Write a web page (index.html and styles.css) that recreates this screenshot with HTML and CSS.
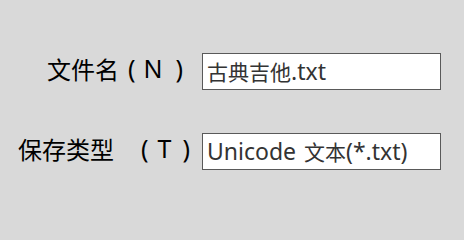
FILE: index.html
```html
<!DOCTYPE html>
<html lang="zh">
<head>
<meta charset="utf-8">
<link rel="stylesheet" href="styles.css">
</head>
<body>
<div class="form">
  <div class="label label-name">
    <span class="zh">文件名</span><span class="paren open">(</span><span class="key">N</span><span class="paren close">)</span>
  </div>
  <div class="field"><span class="zh">古典吉他</span>.txt</div>
  <div class="label label-type">
    <span class="zh">保存类型</span><span class="paren open">(</span><span class="key">T</span><span class="paren close">)</span>
  </div>
  <div class="field">Unicode <span class="zh spaced">文本</span>(*.txt)</div>
</div>
</body>
</html>
```

FILE: styles.css
```css
html, body {
  margin: 0;
  padding: 0;
}
body {
  background: #d9d9d9;
  width: 464px;
  height: 226px;
  overflow: hidden;
}
.form {
  display: grid;
  grid-template-columns: 190px 239px;
  grid-auto-rows: 37px;
  column-gap: 12px;
  row-gap: 43px;
  padding-top: 53px;
}
.label {
  font-family: "Noto Sans", "Noto Sans CJK SC", sans-serif;
  font-size: 25px;
  color: #000;
  display: flex;
  align-items: center;
  justify-content: flex-end;
  white-space: nowrap;
  padding-bottom: 7px;
  box-sizing: border-box;
}
.label .zh {
  font-family: "Noto Sans CJK SC", sans-serif;
  font-size: 24px;
}
.label-name .open { margin-left: 9px; }
.label-name .key { margin-left: 8px; }
.label-name .close { margin-left: 13px; }
.label-name { padding-right: 7px; }
.label-type .open { margin-left: 27px; }
.label-type .key { margin-left: 9px; }
.label-type .close { margin-left: 11px; }
.field {
  box-sizing: border-box;
  background: #fff;
  border: 1px solid #595959;
  font-family: "Noto Sans", "Noto Sans CJK SC", sans-serif;
  font-size: 23px;
  color: #333;
  display: flex;
  align-items: center;
  padding-left: 4px;
  padding-bottom: 2px;
  white-space: pre;
}
.field .zh {
  font-family: "Noto Sans CJK SC", sans-serif;
  font-size: 21px;
}
.field .spaced {
  margin-left: 2px;
}
```
